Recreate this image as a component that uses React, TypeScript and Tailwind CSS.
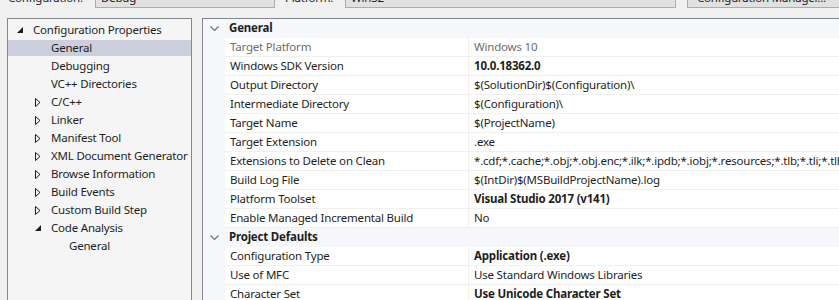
import React from 'react';

type TreeItem = { label: string; depth: number; expander?: 'open' | 'closed'; selected?: boolean };

const treeItems: TreeItem[] = [
  { label: 'Configuration Properties', depth: 0, expander: 'open' },
  { label: 'General', depth: 1, selected: true },
  { label: 'Debugging', depth: 1 },
  { label: 'VC++ Directories', depth: 1 },
  { label: 'C/C++', depth: 1, expander: 'closed' },
  { label: 'Linker', depth: 1, expander: 'closed' },
  { label: 'Manifest Tool', depth: 1, expander: 'closed' },
  { label: 'XML Document Generator', depth: 1, expander: 'closed' },
  { label: 'Browse Information', depth: 1, expander: 'closed' },
  { label: 'Build Events', depth: 1, expander: 'closed' },
  { label: 'Custom Build Step', depth: 1, expander: 'closed' },
  { label: 'Code Analysis', depth: 1, expander: 'open' },
  { label: 'General', depth: 2 },
];

type Row =
  | { kind: 'group'; label: string }
  | { kind: 'prop'; name: string; value: string; bold?: boolean; disabled?: boolean };

const rows: Row[] = [
  { kind: 'group', label: 'General' },
  { kind: 'prop', name: 'Target Platform', value: 'Windows 10', disabled: true },
  { kind: 'prop', name: 'Windows SDK Version', value: '10.0.18362.0', bold: true },
  { kind: 'prop', name: 'Output Directory', value: '$(SolutionDir)$(Configuration)\\' },
  { kind: 'prop', name: 'Intermediate Directory', value: '$(Configuration)\\' },
  { kind: 'prop', name: 'Target Name', value: '$(ProjectName)' },
  { kind: 'prop', name: 'Target Extension', value: '.exe' },
  {
    kind: 'prop',
    name: 'Extensions to Delete on Clean',
    value: '*.cdf;*.cache;*.obj;*.obj.enc;*.ilk;*.ipdb;*.iobj;*.resources;*.tlb;*.tli;*.tlh;*.tmp;*.rsp;*.pgc;*.pgd;*.meta;*.tlog;*.manifest;*.res;*.pch;*.exp;*.idb;*.rep;*.xdc;*.pdb;*_manifest.rc;*.bsc;*.sbr;*.xml;*.metagen;*.bi',
  },
  { kind: 'prop', name: 'Build Log File', value: '$(IntDir)$(MSBuildProjectName).log' },
  { kind: 'prop', name: 'Platform Toolset', value: 'Visual Studio 2017 (v141)', bold: true },
  { kind: 'prop', name: 'Enable Managed Incremental Build', value: 'No' },
  { kind: 'group', label: 'Project Defaults' },
  { kind: 'prop', name: 'Configuration Type', value: 'Application (.exe)', bold: true },
  { kind: 'prop', name: 'Use of MFC', value: 'Use Standard Windows Libraries' },
  { kind: 'prop', name: 'Character Set', value: 'Use Unicode Character Set', bold: true },
];

const Expander = ({ type }: { type: 'open' | 'closed' }) =>
  type === 'open' ? (
    <svg width="6" height="6" viewBox="0 0 6 6" className="shrink-0">
      <path d="M6 0 L6 6 L0 6 Z" fill="#1e1e1e" />
    </svg>
  ) : (
    <svg width="6" height="9" viewBox="0 0 6 9" className="shrink-0">
      <path d="M0.5 0.5 L5 4.5 L0.5 8.5 Z" fill="none" stroke="#1e1e1e" strokeWidth="1" />
    </svg>
  );

const Chevron = () => (
  <svg width="9" height="6" viewBox="0 0 9 6">
    <path d="M0.5 0.5 L4.5 4.5 L8.5 0.5" fill="none" stroke="#717171" strokeWidth="1.2" />
  </svg>
);

export default function App() {
  return (
    <div
      className="w-[839px] h-[300px] overflow-hidden bg-[#f0f0f0] text-[11.5px] tracking-[-0.2px] text-[#1e1e1e]"
      style={{ fontFamily: '"Segoe UI", "Noto Sans", sans-serif' }}
    >
      {/* Toolbar (cut off at top) */}
      <div className="h-[8px] flex items-end overflow-visible">
        <div className="flex items-end">
          <div className="w-[95px] pl-[8px] h-[21px] flex items-center">Configuration:</div>
          <div className="w-[180px] h-[21px] border border-[#adadad] bg-[#e1e1e1] pl-[5px] flex items-center">Debug</div>
          <div className="w-[70px] pl-[10px] h-[21px] flex items-center">Platform:</div>
          <div className="w-[331px] h-[21px] border border-[#adadad] bg-[#e1e1e1] pl-[5px] flex items-center">Win32</div>
          <div className="ml-[11px] w-[160px] h-[21px] border border-[#adadad] bg-[#e1e1e1] pl-[9px] flex items-center">
            Configuration Manager...
          </div>
        </div>
      </div>

      <div className="flex mt-[10px] h-[300px]">
        {/* Tree */}
        <div className="ml-[7px] w-[185px] shrink-0 border border-[#828790] bg-[#f5f5f5] pt-[3px] flex flex-col gap-[2px]">
          {treeItems.map((item, i) => (
            <div key={i} className={`h-[16px] flex items-center ${item.selected ? 'bg-[#cccedb]' : ''}`}>
              <div className="flex items-center justify-end shrink-0" style={{ width: 15 + item.depth * 18 }}>
                {item.expander && <Expander type={item.expander} />}
              </div>
              <span className="pl-[10px] leading-[16px] -mt-[1px] whitespace-nowrap">{item.label}</span>
            </div>
          ))}
        </div>

        {/* Property grid */}
        <div className="ml-[10px] flex-1 border-l border-t border-[#828790] bg-[#f5f7fb] overflow-hidden">
          {rows.map((row, i) =>
            row.kind === 'group' ? (
              <div key={i} className="h-[19px] flex items-center">
                <div className="w-[22px] shrink-0 flex items-center justify-center pl-[1px]">
                  <Chevron />
                </div>
                <span className="pl-[4px] -mt-[1px] font-bold whitespace-nowrap">{row.label}</span>
              </div>
            ) : (
              <div key={i} className="h-[19px] flex">
                <div className="w-[22px] shrink-0" />
                <div className="flex-1 flex bg-white border-b border-[#f0f0f0] min-w-0">
                  <div
                    className={`w-[244px] shrink-0 pl-[5px] pb-[1px] flex items-center border-r border-[#f0f0f0] whitespace-nowrap ${row.disabled ? 'text-[#6d6d6d]' : ''}`}
                  >
                    {row.name}
                  </div>
                  <div
                    className={`flex-1 pl-[5px] pb-[1px] flex items-center whitespace-nowrap overflow-hidden ${row.bold ? 'font-bold' : ''} ${row.disabled ? 'text-[#6d6d6d]' : ''}`}
                  >
                    {row.value}
                  </div>
                </div>
              </div>
            )
          )}
        </div>
      </div>
    </div>
  );
}
